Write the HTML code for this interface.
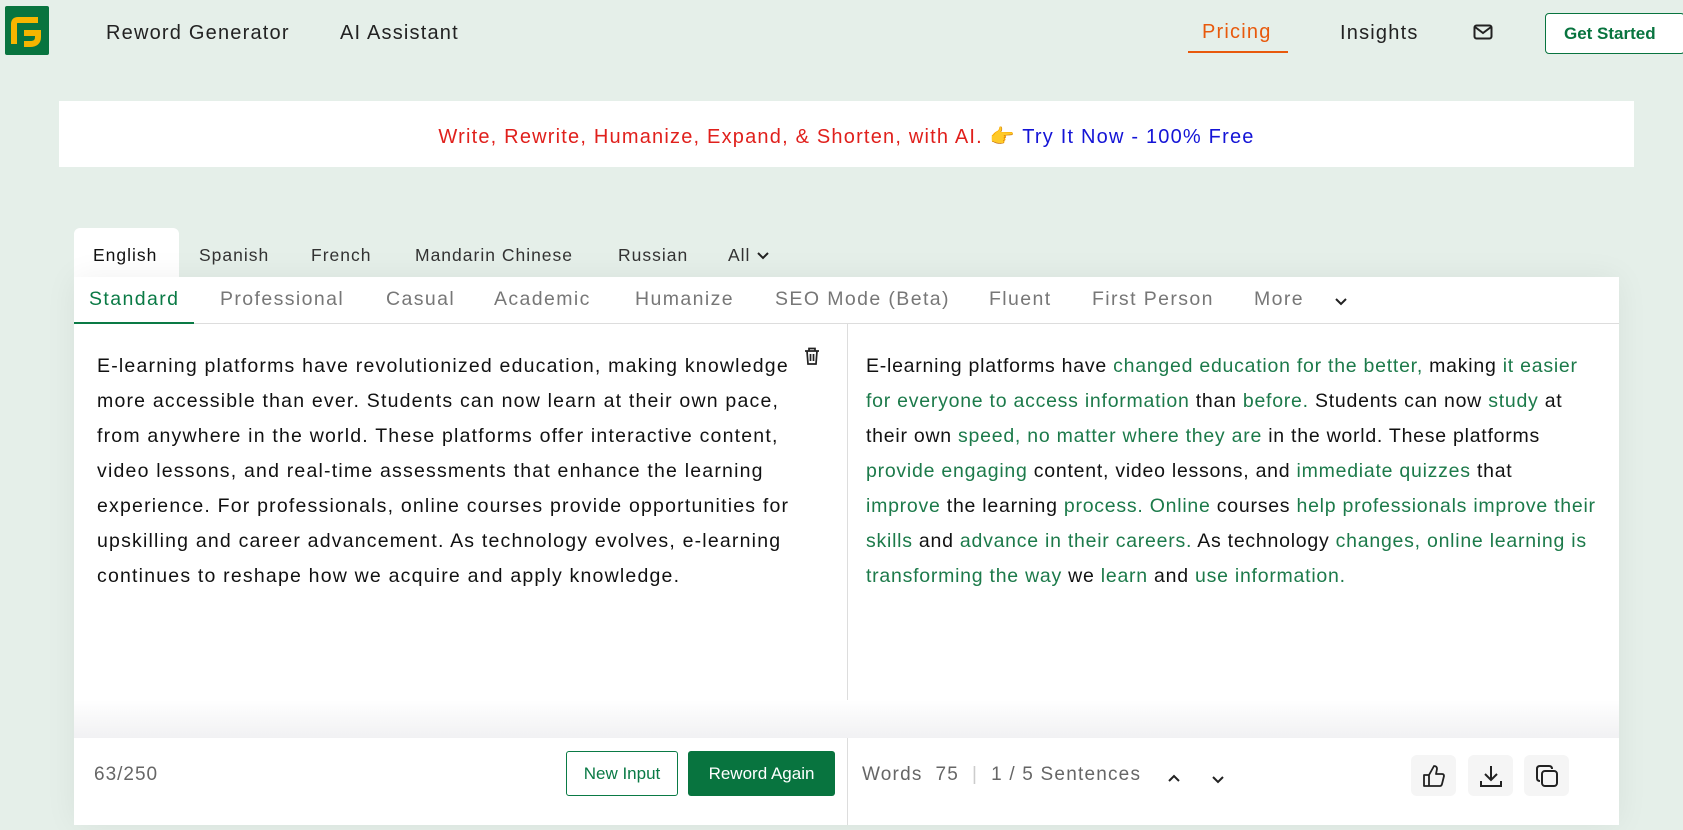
<!DOCTYPE html>
<html><head><meta charset="utf-8"><style>
*{margin:0;padding:0;box-sizing:border-box}
body{width:1683px;height:830px;overflow:hidden;background:#e5efe9;font-family:"Liberation Sans",sans-serif;position:relative;color:#222}
.a{position:absolute;white-space:nowrap}
.nav{font-size:20px;color:#222;letter-spacing:1.2px}
.logo{left:5px;top:6px;width:44px;height:49px;background:#08743f;border-radius:2px}
.banner{left:59px;top:101px;width:1575px;height:66px;background:#fff;text-align:center;line-height:72px;font-size:20px;letter-spacing:1.2px}
.panel{left:74px;top:277px;width:1545px;height:548px;background:#fff;box-shadow:0 0 30px rgba(0,0,0,.06)}
.lt{font-size:17.5px;color:#333;top:245px;letter-spacing:1px}
.mt{font-size:19.5px;color:#777;top:288px;letter-spacing:1.4px}
.txt{font-size:19.5px;line-height:35px;color:#111;top:349px;white-space:nowrap;letter-spacing:1.2px}
.g{color:#1c7a4a}
.btn{border-radius:3px;font-size:17px;text-align:center;line-height:45px;height:45px;top:751px}
.ic{top:755px;width:45px;height:41px;background:#f5f5f5;border-radius:6px;display:flex;align-items:center;justify-content:center}
</style></head><body>
<div class="a logo"><svg width="44" height="49" viewBox="0 0 44 49"><path d="M9 38V18q0-4 4-4h4M17 14h16M19 27h14v4q0 7-8 7h-6" stroke="#f7b500" stroke-width="6" fill="none"/></svg></div>
<div class="a nav" style="left:106px;top:22px">Reword Generator</div>
<div class="a nav" style="left:340px;top:22px">AI Assistant</div>
<div class="a nav" style="left:1202px;top:21px;color:#e8590c">Pricing</div>
<div class="a" style="left:1188px;top:51px;width:100px;height:2px;background:#e8590c"></div>
<div class="a nav" style="left:1340px;top:22px">Insights</div>
<div class="a" style="left:1473px;top:24px"><svg width="20" height="16" viewBox="0 0 20 16"><rect x="1.5" y="1.5" width="17" height="13" rx="2" fill="none" stroke="#222" stroke-width="2"/><path d="M2 3l8 6 8-6" fill="none" stroke="#222" stroke-width="2"/></svg></div>
<div class="a" style="left:1545px;top:13px;width:140px;height:41px;border:1px solid #08743f;border-radius:4px;background:#fff;color:#08743f;font-size:17px;font-weight:bold;line-height:39px;padding-left:18px">Get Started</div>
<div class="a banner"><span style="color:#e0201c">Write, Rewrite, Humanize, Expand, &amp; Shorten, with AI.</span> <span style="color:#e8a000">👉</span> <span style="color:#1414d6">Try It Now - 100% Free</span></div>
<div class="a" style="left:74px;top:228px;width:105px;height:50px;background:#fff;border-radius:6px 6px 0 0"></div>
<div class="a lt" style="left:93px;color:#111">English</div>
<div class="a lt" style="left:199px">Spanish</div>
<div class="a lt" style="left:311px">French</div>
<div class="a lt" style="left:415px">Mandarin Chinese</div>
<div class="a lt" style="left:618px">Russian</div>
<div class="a lt" style="left:728px">All <svg width="14" height="10" viewBox="0 0 14 10"><path d="M2 2l5 5 5-5" fill="none" stroke="#222" stroke-width="2"/></svg></div>
<div class="a panel"></div>
<div class="a" style="left:74px;top:323px;width:1545px;height:1px;background:#ddd"></div>
<div class="a" style="left:847px;top:324px;width:1px;height:501px;background:#ddd"></div>
<div class="a" style="left:74px;top:700px;width:1545px;height:38px;background:linear-gradient(#fff,#f1f1f3)"></div>
<div class="a mt" style="left:89px;color:#0a7a45">Standard</div>
<div class="a" style="left:74px;top:322px;width:120px;height:2px;background:#0a7a45"></div>
<div class="a mt" style="left:220px">Professional</div>
<div class="a mt" style="left:386px">Casual</div>
<div class="a mt" style="left:494px">Academic</div>
<div class="a mt" style="left:635px">Humanize</div>
<div class="a mt" style="left:775px">SEO Mode (Beta)</div>
<div class="a mt" style="left:989px">Fluent</div>
<div class="a mt" style="left:1092px">First Person</div>
<div class="a mt" style="left:1254px">More</div>
<div class="a" style="left:1334px;top:294px"><svg width="14" height="10" viewBox="0 0 14 10"><path d="M2 2l5 5 5-5" fill="none" stroke="#222" stroke-width="2"/></svg></div>
<div class="a" style="left:803px;top:346px"><svg width="18" height="20" viewBox="0 0 18 20"><path d="M2 5h14M6 5V2.5h6V5M4 5l1 13h8l1-13M7.5 8v7M10.5 8v7" fill="none" stroke="#222" stroke-width="1.7"/></svg></div>
<div class="a txt" style="left:97px">E-learning platforms have revolutionized education, making knowledge<br>more accessible than ever. Students can now learn at their own pace,<br>from anywhere in the world. These platforms offer interactive content,<br>video lessons, and real-time assessments that enhance the learning<br>experience. For professionals, online courses provide opportunities for<br>upskilling and career advancement. As technology evolves, e-learning<br>continues to reshape how we acquire and apply knowledge.</div>
<div class="a txt" style="left:866px;letter-spacing:0.75px">E-learning platforms have <span class="g">changed education for the better,</span> making <span class="g">it easier</span><br><span class="g">for everyone to access information</span> than <span class="g">before.</span> Students can now <span class="g">study</span> at<br>their own <span class="g">speed, no matter where they are</span> in the world. These platforms<br><span class="g">provide engaging</span> content, video lessons, and <span class="g">immediate quizzes</span> that<br><span class="g">improve</span> the learning <span class="g">process. Online</span> courses <span class="g">help professionals improve their</span><br><span class="g">skills</span> and <span class="g">advance in their careers.</span> As technology <span class="g">changes, online learning is</span><br><span class="g">transforming the way</span> we <span class="g">learn</span> and <span class="g">use information.</span></div>
<div class="a" style="left:94px;top:764px;font-size:19px;color:#666;letter-spacing:1px">63/250</div>
<div class="a btn" style="left:566px;width:112px;border:1px solid #0a7a45;color:#0a7a45;background:#fff;line-height:43px">New Input</div>
<div class="a btn" style="left:688px;width:147px;background:#08743f;color:#fff">Reword Again</div>
<div class="a" style="left:862px;top:764px;font-size:19px;color:#666;letter-spacing:1.2px">Words &nbsp;75 <span style="color:#ccc">&nbsp;|&nbsp;</span> 1 / 5 Sentences</div>
<div class="a" style="left:1167px;top:770px"><svg width="14" height="10" viewBox="0 0 14 10"><path d="M2 8l5-5 5 5" fill="none" stroke="#222" stroke-width="2"/></svg></div>
<div class="a" style="left:1211px;top:772px"><svg width="14" height="10" viewBox="0 0 14 10"><path d="M2 2l5 5 5-5" fill="none" stroke="#222" stroke-width="2"/></svg></div>
<div class="a ic" style="left:1411px"><svg width="26" height="26" viewBox="0 0 26 26"><path d="M3 12h5v11H3zM8 12l5-9q3 0 3 3l-1 5h6q2 0 2 2l-2 8q-.5 2-2 2H8" fill="none" stroke="#222" stroke-width="1.8" stroke-linejoin="round"/></svg></div>
<div class="a ic" style="left:1468px"><svg width="26" height="26" viewBox="0 0 26 26"><path d="M13 3v14M7 11l6 6 6-6M3 18v5h20v-5" fill="none" stroke="#222" stroke-width="2"/></svg></div>
<div class="a ic" style="left:1524px"><svg width="26" height="26" viewBox="0 0 26 26"><rect x="8" y="8" width="15" height="15" rx="3" fill="none" stroke="#222" stroke-width="2"/><path d="M18 6q0-3-3-3H6Q3 3 3 6v9q0 3 3 3" fill="none" stroke="#222" stroke-width="2"/></svg></div>
</body></html>
